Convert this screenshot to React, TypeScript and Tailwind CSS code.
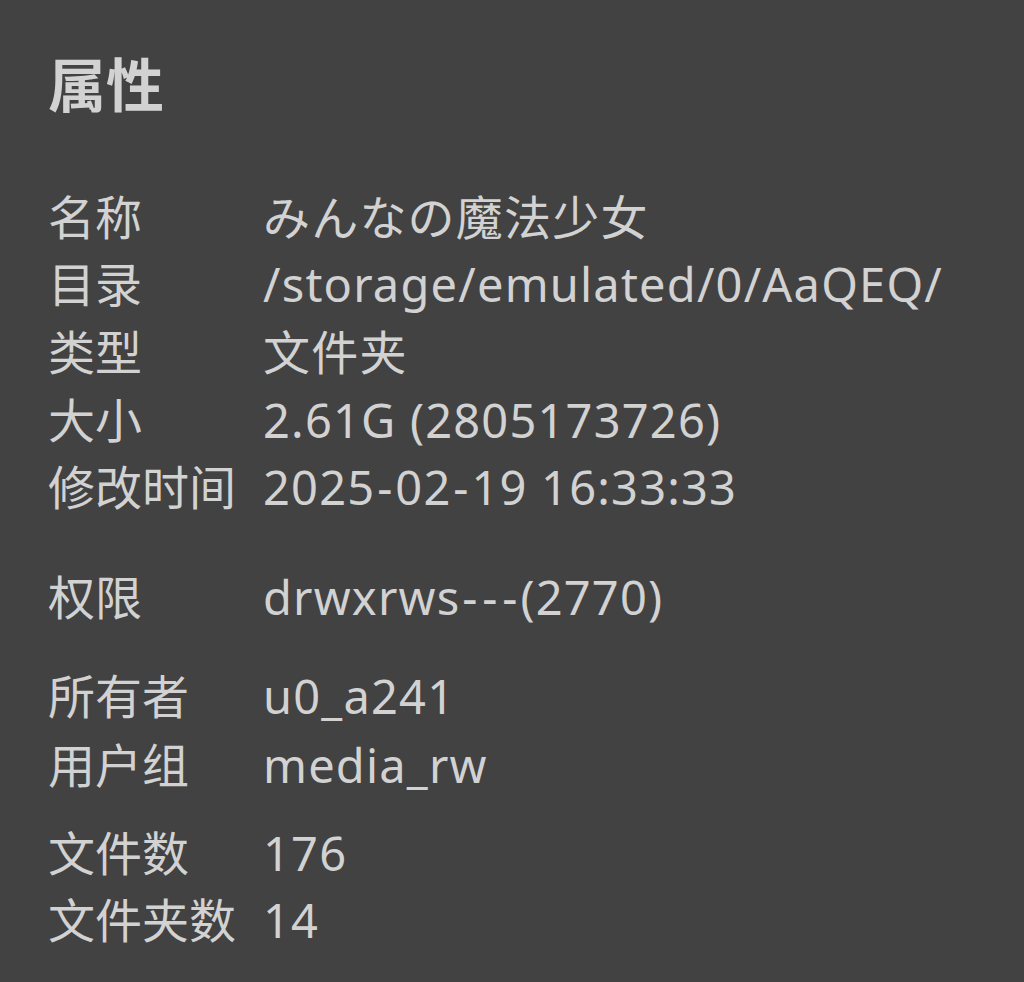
import React from "react";

const font = { fontFamily: '"Noto Sans", "Noto Sans CJK SC", sans-serif' };

function Value({ v }: { v: string }) {
  const parts = v.split("-");
  return (
    <div className="whitespace-nowrap tracking-[1.2px]">
      {parts.map((p, i) => (
        <React.Fragment key={i}>
          {i > 0 && <span className="inline-block w-[20px] text-center">-</span>}
          {p}
        </React.Fragment>
      ))}
    </div>
  );
}

function Line({ k, v, cls }: { k: string; v: string; cls: string }) {
  return (
    <div className={`flex h-[68px] items-center ${cls}`}>
      <div className="w-[215px] shrink-0">{k}</div>
      <Value v={v} />
    </div>
  );
}

export default function App() {
  return (
    <div
      className="w-[1024px] h-[982px] bg-[#424242] text-[#d2d2d2] pl-[48px] pt-[50px] overflow-hidden"
      style={font}
    >
      <div className="h-[68px] flex items-center text-[58px] font-bold mb-[65px]">属性</div>
      <div className="text-[47px]">
        <Line k="名称" v="みんなの魔法少女" cls="" />
        <Line k="目录" v="/storage/emulated/0/AaQEQ/" cls="-mt-[1px]" />
        <Line k="类型" v="文件夹" cls="" />
        <Line k="大小" v="2.61G (2805173726)" cls="" />
        <Line k="修改时间" v="2025-02-19 16:33:33" cls="-mt-[1px]" />
        <Line k="权限" v="drwxrws---(2770)" cls="mt-[42px]" />
        <Line k="所有者" v="u0_a241" cls="mt-[31px]" />
        <Line k="用户组" v="media_rw" cls="mt-[1px]" />
        <Line k="文件数" v="176" cls="mt-[20px]" />
        <Line k="文件夹数" v="14" cls="-mt-[1px]" />
      </div>
    </div>
  );
}
